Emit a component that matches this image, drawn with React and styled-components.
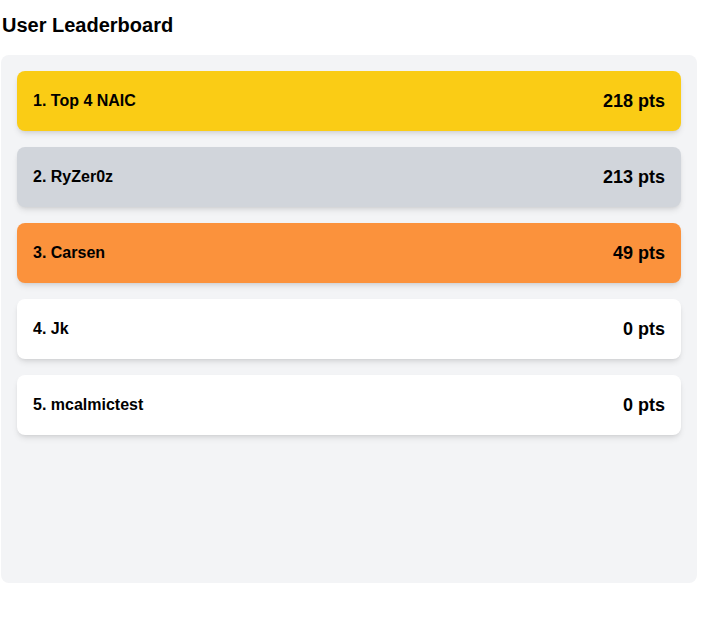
import React from 'react';
import styled, { createGlobalStyle } from 'styled-components';

const GlobalStyle = createGlobalStyle`
  body {
    margin: 0;
    background: #ffffff;
    font-family: "Liberation Sans", Arial, sans-serif;
    color: #000000;
  }
`

const Page = styled.div`
  width: 696px;
  padding: 11px 0 0 1px;
`

const Title = styled.h2`
  margin: 0 0 16px 1px;
  font-size: 20px;
  line-height: 28px;
  font-weight: 700;
`

const Board = styled.div`
  display: flex;
  flex-direction: column;
  gap: 16px;
  height: 528px;
  box-sizing: border-box;
  padding: 16px;
  background: #f3f4f6;
  border-radius: 8px;
`

const bg = {
  gold: '#facc15',
  silver: '#d1d5db',
  bronze: '#fb923c',
  plain: '#ffffff',
}

const Row = styled.div`
  display: flex;
  align-items: center;
  justify-content: space-between;
  height: 60px;
  box-sizing: border-box;
  padding: 0 16px;
  border-radius: 8px;
  background: ${p => bg[p.$tone]};
  box-shadow: 0 4px 6px -1px rgba(0, 0, 0, 0.1), 0 2px 4px -2px rgba(0, 0, 0, 0.1);
`

const Name = styled.span`
  font-size: 16px;
  font-weight: 700;
`

const Points = styled.span`
  font-size: 18px;
  font-weight: 700;
`

const users = [
  { name: 'Top 4 NAIC', pts: 218 },
  { name: 'RyZer0z', pts: 213 },
  { name: 'Carsen', pts: 49 },
  { name: 'Jk', pts: 0 },
  { name: 'mcalmictest', pts: 0 },
]

const tones = ['gold', 'silver', 'bronze']

const App = () => {
  return (
    <>
      <GlobalStyle />
      <Page>
        <Title>User Leaderboard</Title>
        <Board>
          {users.map((u, i) => (
            <Row key={u.name} $tone={tones[i] || 'plain'}>
              <Name>{i + 1}. {u.name}</Name>
              <Points>{u.pts} pts</Points>
            </Row>
          ))}
        </Board>
      </Page>
    </>
  );
};

export default App;
